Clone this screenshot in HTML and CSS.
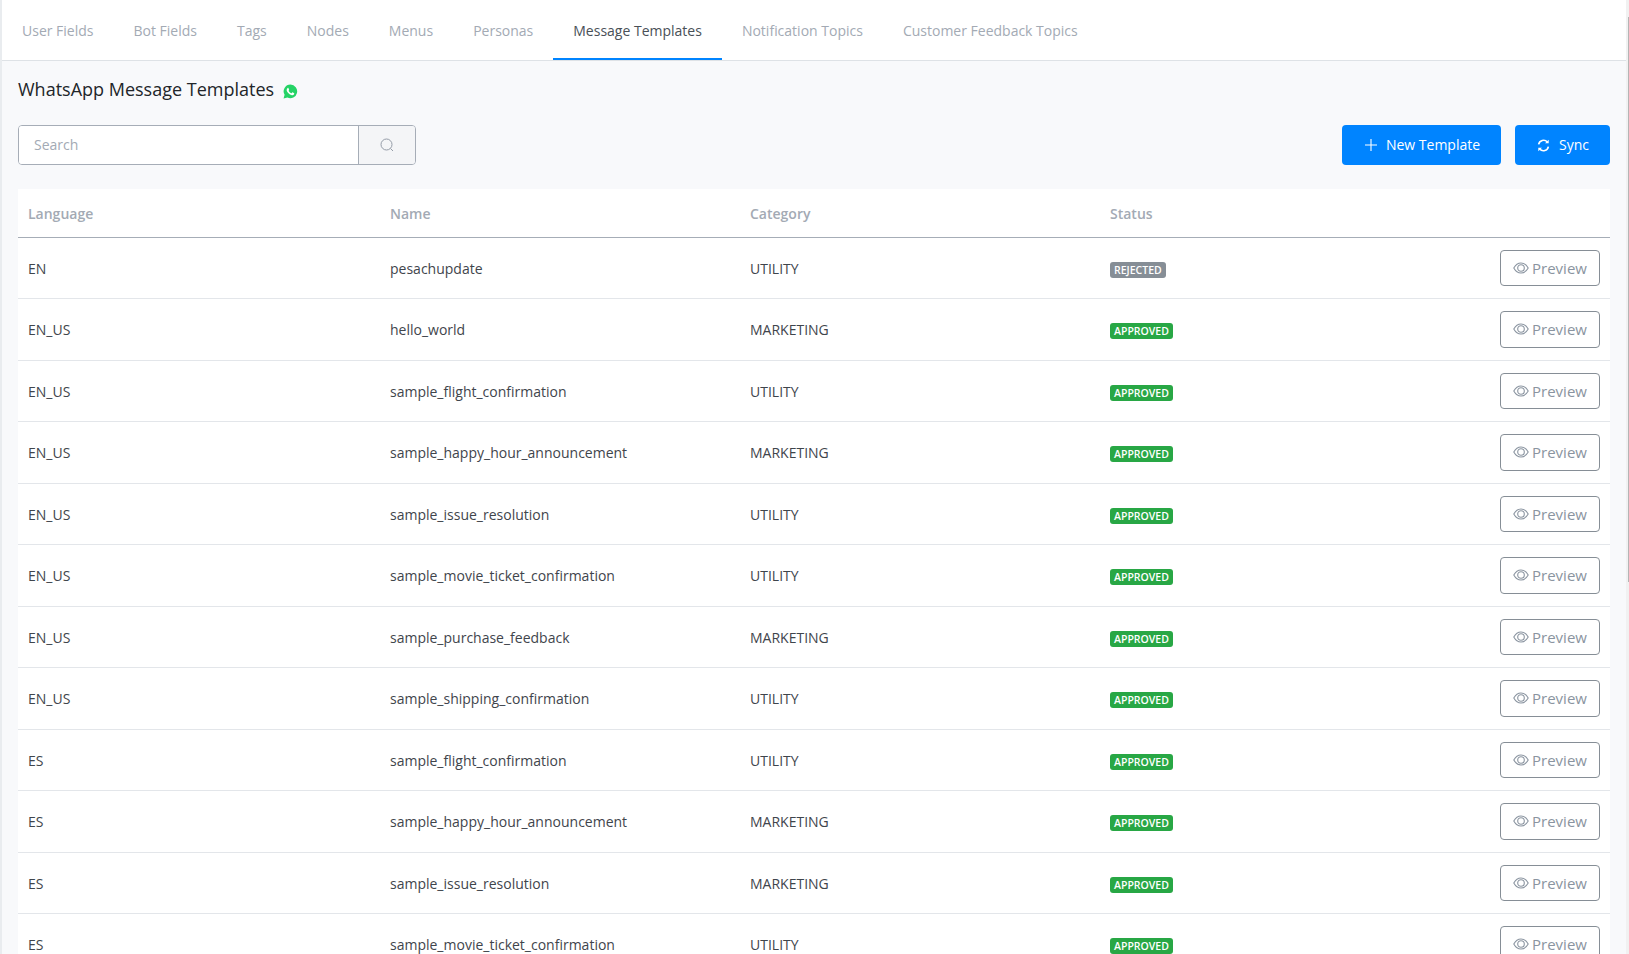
FILE: index.html
```html
<!DOCTYPE html>
<html lang="en">
<head>
    <meta charset="UTF-8">
    <meta name="viewport" content="width=device-width, initial-scale=1.0">
    <title>WhatsApp Message Templates</title>
    <link rel="stylesheet" href="styles.css">
</head>
<body>
    <svg class="icon-defs" width="0" height="0">
        <symbol id="eye" viewBox="0 0 16 16">
            <path d="M.8 8c1.800-3.300 4.300-5 7.200-5s5.400 1.700 7.200 5c-1.800 3.300-4.300 5-7.200 5S2.600 11.300.8 8z" fill="none" stroke="currentColor" stroke-width="1.100"/>
            <circle cx="8" cy="8" r="3.300" fill="none" stroke="currentColor" stroke-width="1.100"/>
        </symbol>
    </svg>

    <div class="page">
        <!-- Tabs -->
        <nav class="tabs">
            <a href="#">User Fields</a>
            <a href="#">Bot Fields</a>
            <a href="#">Tags</a>
            <a href="#">Nodes</a>
            <a href="#">Menus</a>
            <a href="#">Personas</a>
            <a href="#" class="active">Message Templates</a>
            <a href="#">Notification Topics</a>
            <a href="#">Customer Feedback Topics</a>
        </nav>

        <!-- Main Content -->
        <div class="main-content">
            <h1>WhatsApp Message Templates
                <svg class="wa-icon" viewBox="0 0 16 16">
                    <path d="M8 .5a7.300 7.300 0 0 0-6.300 11L.6 15.500l4.100-1.100A7.300 7.300 0 1 0 8 .5z" fill="#25d366"/>
                    <path d="M5.700 3.900c-.3 0-.7.1-1 .5-.4.5-.8 1.100-.8 2 0 1 .7 2.100 1.700 3.200 1.100 1.200 2.500 2 3.800 2.300.9.200 1.700 0 2.200-.6.300-.4.400-.9.400-1.300l-.1-.2-1.700-.9c-.2-.1-.3 0-.4.100l-.6.800c-.1.100-.2.100-.4.100-.7-.3-1.200-.6-1.700-1.100-.5-.5-.8-1-1.100-1.500-.1-.2 0-.3.100-.4l.4-.5c.1-.1.100-.3 0-.4l-.7-1.700c-.1-.3-.3-.4-.5-.4z" fill="#fff"/>
                </svg>
            </h1>

            <div class="toolbar">
                <div class="search-box">
                    <input type="text" placeholder="Search">
                    <button type="button" aria-label="Search">
                        <svg viewBox="0 0 14 14" width="14" height="14"><circle cx="6.500" cy="6.500" r="5.500" fill="none" stroke="currentColor"/><path d="M10.500 10.500l2.500 2.500" stroke="currentColor"/></svg>
                    </button>
                </div>
                <div class="toolbar-actions">
                    <button type="button" class="btn-primary btn-new">
                        <svg viewBox="0 0 14 14" width="14" height="14"><path d="M7 1v12M1 7h12" stroke="currentColor" stroke-width="1.100"/></svg>
                        New Template
                    </button>
                    <button type="button" class="btn-primary btn-sync">
                        <svg viewBox="0 0 12 12" width="13" height="13"><path d="M1.500 5a4.600 4.600 0 0 1 8-2.200M10.500 7a4.600 4.600 0 0 1-8 2.200" fill="none" stroke="currentColor" stroke-width="1.500"/><path d="M10.800 .6v3.400H7.400zM1.200 11.400V8h3.400z" fill="currentColor"/></svg>
                        Sync
                    </button>
                </div>
            </div>

            <table class="templates-table">
                <thead>
                    <tr>
                        <th class="col-lang">Language</th>
                        <th class="col-name">Name</th>
                        <th class="col-cat">Category</th>
                        <th>Status</th>
                        <th></th>
                    </tr>
                </thead>
                <tbody>
                    <tr><td>EN</td><td>pesachupdate</td><td>UTILITY</td><td><span class="badge rejected">REJECTED</span></td><td><button type="button" class="btn-preview"><svg width="16" height="16"><use href="#eye"/></svg>Preview</button></td></tr>
                    <tr><td>EN_US</td><td>hello_world</td><td>MARKETING</td><td><span class="badge approved">APPROVED</span></td><td><button type="button" class="btn-preview"><svg width="16" height="16"><use href="#eye"/></svg>Preview</button></td></tr>
                    <tr><td>EN_US</td><td>sample_flight_confirmation</td><td>UTILITY</td><td><span class="badge approved">APPROVED</span></td><td><button type="button" class="btn-preview"><svg width="16" height="16"><use href="#eye"/></svg>Preview</button></td></tr>
                    <tr><td>EN_US</td><td>sample_happy_hour_announcement</td><td>MARKETING</td><td><span class="badge approved">APPROVED</span></td><td><button type="button" class="btn-preview"><svg width="16" height="16"><use href="#eye"/></svg>Preview</button></td></tr>
                    <tr><td>EN_US</td><td>sample_issue_resolution</td><td>UTILITY</td><td><span class="badge approved">APPROVED</span></td><td><button type="button" class="btn-preview"><svg width="16" height="16"><use href="#eye"/></svg>Preview</button></td></tr>
                    <tr><td>EN_US</td><td>sample_movie_ticket_confirmation</td><td>UTILITY</td><td><span class="badge approved">APPROVED</span></td><td><button type="button" class="btn-preview"><svg width="16" height="16"><use href="#eye"/></svg>Preview</button></td></tr>
                    <tr><td>EN_US</td><td>sample_purchase_feedback</td><td>MARKETING</td><td><span class="badge approved">APPROVED</span></td><td><button type="button" class="btn-preview"><svg width="16" height="16"><use href="#eye"/></svg>Preview</button></td></tr>
                    <tr><td>EN_US</td><td>sample_shipping_confirmation</td><td>UTILITY</td><td><span class="badge approved">APPROVED</span></td><td><button type="button" class="btn-preview"><svg width="16" height="16"><use href="#eye"/></svg>Preview</button></td></tr>
                    <tr><td>ES</td><td>sample_flight_confirmation</td><td>UTILITY</td><td><span class="badge approved">APPROVED</span></td><td><button type="button" class="btn-preview"><svg width="16" height="16"><use href="#eye"/></svg>Preview</button></td></tr>
                    <tr><td>ES</td><td>sample_happy_hour_announcement</td><td>MARKETING</td><td><span class="badge approved">APPROVED</span></td><td><button type="button" class="btn-preview"><svg width="16" height="16"><use href="#eye"/></svg>Preview</button></td></tr>
                    <tr><td>ES</td><td>sample_issue_resolution</td><td>MARKETING</td><td><span class="badge approved">APPROVED</span></td><td><button type="button" class="btn-preview"><svg width="16" height="16"><use href="#eye"/></svg>Preview</button></td></tr>
                    <tr><td>ES</td><td>sample_movie_ticket_confirmation</td><td>UTILITY</td><td><span class="badge approved">APPROVED</span></td><td><button type="button" class="btn-preview"><svg width="16" height="16"><use href="#eye"/></svg>Preview</button></td></tr>
                </tbody>
            </table>
        </div>
    </div>

    <div class="scrollbar"><div class="scrollbar-thumb"></div></div>
</body>
</html>
```

FILE: styles.css
```css
html, body {
    height: 100%;
}

body {
    font-family: "Open Sans", Arial, sans-serif;
    font-size: 14px;
    color: #343a40;
    background-color: #f8f9fb;
    margin: 0;
    overflow: hidden;
    display: flex;
}

.icon-defs {
    position: absolute;
}

.page {
    flex-grow: 1;
    min-width: 0;
    height: 954px;
    overflow: hidden;
    border-left: 2px solid #e9ecef;
}

/* Tabs */
.tabs {
    display: flex;
    height: 60px;
    background-color: white;
    border-bottom: 1px solid #dee2e6;
    box-sizing: content-box;
}

.tabs a {
    color: #a3aab4;
    text-decoration: none;
    padding: 0 20px;
    line-height: 61px;
    height: 60px;
    box-sizing: border-box;
}

.tabs a.active {
    color: #495057;
    border-bottom: 2px solid #0084ff;
}

/* Main Content */
.main-content {
    padding: 0 16px;
}

.main-content h1 {
    font-size: 18px;
    font-weight: 400;
    color: #212529;
    line-height: 27px;
    margin: 15px 0 22px;
    display: flex;
    align-items: center;
    gap: 9px;
}

.wa-icon {
    width: 15px;
    height: 15px;
    margin-top: 3px;
}

.toolbar {
    display: flex;
    justify-content: space-between;
    margin-bottom: 24px;
}

.search-box {
    display: flex;
    width: 398px;
    height: 40px;
    border: 1px solid #a6adb7;
    border-radius: 4px;
    box-sizing: border-box;
    overflow: hidden;
}

.search-box input {
    flex-grow: 1;
    min-width: 0;
    border: none;
    outline: none;
    padding: 0 15px 2px;
    font: inherit;
    background-color: white;
}

.search-box input::placeholder {
    color: #a3aab4;
}

.search-box button {
    width: 57px;
    border: none;
    border-left: 1px solid #a6adb7;
    background-color: #f4f5f7;
    color: #949ca7;
    padding: 2px 0 0;
}

.toolbar-actions {
    display: flex;
    gap: 14px;
}

.btn-primary {
    display: flex;
    align-items: center;
    justify-content: center;
    height: 40px;
    border: none;
    border-radius: 4px;
    background-color: #0084ff;
    color: white;
    font: inherit;
    padding: 0 0 2px 1px;
}

.btn-new {
    width: 159px;
    gap: 8px;
}

.btn-sync {
    width: 95px;
    gap: 9px;
}

.btn-primary svg {
    margin-top: 2px;
}

/* Table */
.templates-table {
    width: 100%;
    border-collapse: separate;
    border-spacing: 0;
    background-color: white;
    table-layout: fixed;
}

.col-lang {
    width: 362px;
}

.col-name,
.col-cat {
    width: 360px;
}

.templates-table th {
    height: 48.5px;
    padding: 1px 10px 0;
    text-align: left;
    font-weight: 600;
    color: #a3aab4;
    border-bottom: 1px solid #a6adb7;
    box-sizing: border-box;
}

.templates-table td {
    height: 61.5px;
    padding: 1px 10px 0;
    color: #3f454c;
    border-bottom: 1px solid #e3e6ea;
    box-sizing: border-box;
}

.badge {
    display: inline-block;
    padding: 0 4px;
    height: 16px;
    line-height: 16px;
    border-radius: 3px;
    font-size: 10.500px;
    font-weight: 600;
    color: white;
    vertical-align: middle;
}

.badge.approved {
    background-color: #28a745;
}

.badge.rejected {
    background-color: #868e96;
}

.btn-preview {
    display: flex;
    align-items: center;
    justify-content: center;
    gap: 3px;
    width: 100px;
    height: 36.5px;
    margin: -1px 0 0 auto;
    padding: 0;
    font: inherit;
    font-size: 15px;
    color: #8a94a0;
    background-color: white;
    border: 1px solid #868e96;
    border-radius: 4px;
}

/* Scrollbar strip */
.scrollbar {
    flex: 0 0 3px;
    height: 954px;
    background-color: #f1f1f1;
    position: relative;
}

.scrollbar-thumb {
    position: absolute;
    right: 0;
    top: 17px;
    width: 1px;
    height: 565px;
    background-color: #b5b5b5;
}
```
